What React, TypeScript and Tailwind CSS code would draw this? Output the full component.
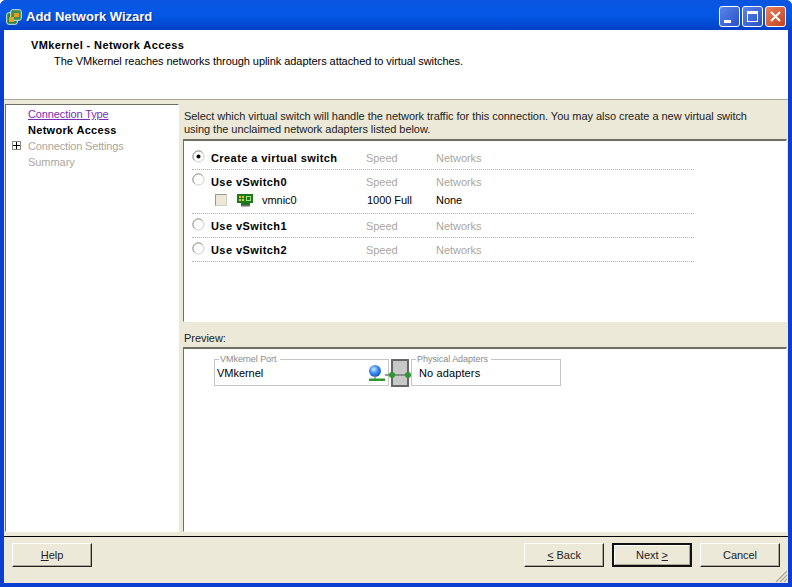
import React from "react";

const font = { fontFamily: '"Liberation Sans", Arial, sans-serif' };

function Radio({ checked }: { checked?: boolean }) {
  return (
    <svg width="13" height="13" viewBox="0 0 13 13" className="shrink-0">
      <circle cx="6.5" cy="6.5" r="5.5" fill="#fff" stroke="#cfccc0" />
      <path d="M2.5 10.5A5.5 5.5 0 0 1 10.5 2.5" fill="none" stroke="#9a988e" />
      {checked && <circle cx="6.5" cy="6.5" r="2" fill="#000" />}
    </svg>
  );
}

function SwitchRow({ label, checked, tight }: { label: string; checked?: boolean; tight?: boolean }) {
  return (
    <div className={tight ? "flex items-center h-[20px] w-[502px] pt-[4px]" : "flex items-center h-[24px] w-[502px] pt-[2px] border-b border-dotted border-[#b5b3aa]"}>
      <div className="w-[19px] flex -mt-[5px]"><Radio checked={checked} /></div>
      <div className="w-[155px] font-bold text-black tracking-[0.42px]">{label}</div>
      <div className="w-[70px] text-[#a9a79d]">Speed</div>
      <div className="text-[#a9a79d]">Networks</div>
    </div>
  );
}

function NicIcon() {
  return (
    <svg width="16" height="13" viewBox="0 0 16 13" className="shrink-0">
      <path d="M0 0H16V9H13V11H4V9H0Z" fill="#1c7a1c" />
      <path d="M4 11H13V12.5H4Z" fill="#6f6f6f" />
      <rect x="2" y="2" width="2" height="2" fill="#e6c832" />
      <rect x="5" y="2" width="2" height="2" fill="#e6c832" />
      <rect x="2" y="5" width="2" height="2" fill="#e6c832" />
      <rect x="5" y="5" width="2" height="2" fill="#bde05a" />
      <rect x="9.5" y="2.5" width="4" height="4" fill="none" stroke="#a6e07a" />
    </svg>
  );
}

function GlobeIcon() {
  return (
    <svg width="16" height="16" viewBox="0 0 16 16" className="shrink-0">
      <defs>
        <radialGradient id="gl" cx="0.4" cy="0.35" r="0.7">
          <stop offset="0" stopColor="#cfe8ff" />
          <stop offset="0.5" stopColor="#3a8cf0" />
          <stop offset="1" stopColor="#1a4fb8" />
        </radialGradient>
      </defs>
      <circle cx="6" cy="6" r="6" fill="url(#gl)" />
      <path d="M6 11V14" stroke="#888" strokeWidth="1.4" />
      <rect x="0" y="13.5" width="16" height="2.5" fill="#2e9a2e" />
    </svg>
  );
}

function Btn({ children, def }: { children: React.ReactNode; def?: boolean }) {
  return (
    <div className={`w-[80px] h-[24px] flex items-center justify-center text-[#222] bg-[#ece9d8] ${def ? "border-2 border-[#111] shadow-[inset_1px_1px_0_#fff,inset_-1px_-1px_0_#aca899]" : "border border-t-white border-l-white border-r-[#222] border-b-[#222] shadow-[inset_-1px_-1px_0_#aca899]"}`}>
      {children}
    </div>
  );
}

function Group({ title, className = "", children }: { title: string; className?: string; children: React.ReactNode }) {
  return (
    <div className={`relative h-[27px] border border-[#c4c4c4] bg-white flex items-center ${className}`}>
      <span className="absolute -top-[6px] left-[4px] bg-white px-[1px] pr-[3px] text-[9px] leading-[11px] text-[#8a8a8a]">{title}</span>
      {children}
    </div>
  );
}

export default function App() {
  return (
    <div style={font} className="w-[792px] h-[587px] text-[11px] leading-[13px] tracking-[-0.04px] flex flex-col overflow-hidden bg-[#0a3fd0] rounded-t-[6px]">
      <div className="h-[30px] shrink-0 flex items-center pt-[3px] pl-[6px] pr-[6px] bg-gradient-to-b from-[#0a55e0] via-[#0458e6] to-[#0340c8]">
        <svg width="16" height="16" viewBox="0 0 16 16" className="mr-[4px]">
          <rect x="0.7" y="3.7" width="10.6" height="11.6" rx="2" fill="#2f7f45" stroke="#dfeed8" />
          <rect x="4.7" y="0.7" width="10.6" height="10.6" rx="2" fill="#3d8f4f" stroke="#d4e8cf" />
          <rect x="3" y="8" width="5" height="5" fill="#e0a526" />
          <rect x="8" y="4" width="5" height="4" fill="#e69a1e" />
        </svg>
        <span className="text-white font-bold text-[13px] tracking-normal [text-shadow:1px_1px_0_#0b2a90]">Add Network Wizard</span>
        <div className="ml-auto flex gap-[2px]">
          <div className="w-[21px] h-[21px] rounded-[3px] border border-white bg-gradient-to-br from-[#5b84ea] to-[#2a4fc6] flex items-end p-[3px]">
            <div className="w-[7px] h-[3px] bg-white ml-[1px]" />
          </div>
          <div className="w-[21px] h-[21px] rounded-[3px] border border-white bg-gradient-to-br from-[#5b84ea] to-[#2a4fc6] flex items-center justify-center">
            <div className="w-[11px] h-[11px] border border-white border-t-[3px]" />
          </div>
          <div className="w-[21px] h-[21px] rounded-[3px] border border-white bg-gradient-to-br from-[#e8815c] to-[#c2401c] flex items-center justify-center">
            <svg width="13" height="13" viewBox="0 0 13 13"><path d="M2 2L11 11M11 2L2 11" stroke="#fff" strokeWidth="2" /></svg>
          </div>
        </div>
      </div>

      <div className="relative flex-1 min-h-0 ml-[4px] mr-[4px] mb-[4px] bg-[#ece9d8] flex flex-col">
        <div className="h-[70px] shrink-0 bg-white pl-[27px] pt-[9px] border-b border-[#aca899] text-black">
          <div className="font-bold tracking-[0.4px]">VMkernel - Network Access</div>
          <div className="pl-[23px] pt-[3px] tracking-[-0.06px]">The VMkernel reaches networks through uplink adapters attached to virtual switches.</div>
        </div>

        <div className="flex-1 min-h-0 flex pt-[4px] pl-[1px] pr-[1px]">
          <div className="w-[174px] shrink-0 bg-white border-t border-l border-t-[#716f64] border-l-[#716f64] border-r border-b border-r-white border-b-white pt-[1px] pl-[22px] leading-[16px]">
            <div className="text-[#7a2fb0] underline tracking-[-0.12px]">Connection Type</div>
            <div className="font-bold text-black tracking-[0.3px]">Network Access</div>
            <div className="relative text-[#a9a79d] tracking-[-0.15px]">
              <span className="absolute -left-[16px] top-[3px] w-[9px] h-[9px] border border-[#888] bg-white flex items-center justify-center">
                <svg width="7" height="7" viewBox="0 0 7 7"><path d="M0 3.5H7M3.5 0V7" stroke="#000" /></svg>
              </span>
              Connection Settings
            </div>
            <div className="text-[#a9a79d]">Summary</div>
          </div>

          <div className="w-[4px] shrink-0" />

          <div className="flex-1 min-w-0 flex flex-col">
            <div className="h-[35px] shrink-0 pt-[6px] pl-[1px] text-[#222]">
              Select which virtual switch will handle the network traffic for this connection. You may also create a new virtual switch<br />using the unclaimed network adapters listed below.
            </div>
            <div className="h-[183px] shrink-0 bg-white border-t-2 border-l border-[#716f64] border-r border-r-white border-b border-b-white pl-[8px] pt-[5px]">
              <SwitchRow label="Create a virtual switch" checked />
              <SwitchRow label="Use vSwitch0" tight />
              <div className="flex items-center h-[24px] w-[502px] pb-[3px] border-b border-dotted border-[#b5b3aa]">
                <div className="w-[23px]" />
                <div className="w-[12px] h-[12px] bg-[#ece9d8] border border-[#cfccc0] border-t-[#9a988e] border-l-[#9a988e] mr-[10px]" />
                <NicIcon />
                <div className="w-[114px] pl-[9px]">vmnic0</div>
                <div className="w-[69px]">1000 Full</div>
                <div>None</div>
              </div>
              <SwitchRow label="Use vSwitch1" />
              <SwitchRow label="Use vSwitch2" />
            </div>
            <div className="h-[25px] shrink-0 flex items-end pb-[2px] pl-[1px] text-[#222]">Preview:</div>
            <div className="flex-1 min-h-0 bg-white border-t-2 border-l border-[#716f64] border-r border-r-white border-b border-b-white pl-[30px] pt-[10px]">
              <div className="flex items-start">
                <Group title="VMkernel Port" className="w-[175px] pl-[2px] pr-[3px] pt-[1px]">
                  <span className="text-black">VMkernel</span>
                  <span className="ml-auto"><GlobeIcon /></span>
                </Group>
                <div className="relative w-[18px] h-[28px] mx-[2px] bg-[#c8c8c8] border-2 border-[#666]">
                  <svg width="32" height="8" viewBox="0 0 32 8" className="absolute -left-[8px] top-[10px] overflow-visible">
                    <path d="M0 4H32" stroke="#777" strokeWidth="1.5" />
                    <circle cx="7" cy="4" r="3" fill="#2a9a2a" />
                    <circle cx="23" cy="4" r="3" fill="#2a9a2a" />
                  </svg>
                </div>
                <Group title="Physical Adapters" className="w-[150px] pl-[7px] pt-[1px]">
                  <span className="text-black tracking-[0.12px]">No adapters</span>
                </Group>
              </div>
            </div>
          </div>
        </div>

        <div className="h-[47px] shrink-0 mt-[4px] border-t border-black flex items-start pt-[6px] px-[8px]">
          <Btn><span><u>H</u>elp</span></Btn>
          <div className="ml-auto flex gap-[8px]">
            <Btn><span><u>&lt;</u> Back</span></Btn>
            <Btn def><span>Next <u>&gt;</u></span></Btn>
            <Btn>Cancel</Btn>
          </div>
        </div>

        <svg width="13" height="13" viewBox="0 0 13 13" className="absolute right-0 bottom-0">
          <path d="M12 1L1 12M12 5L5 12M12 9L9 12" stroke="#aca899" strokeWidth="1.2" />
        </svg>
      </div>
    </div>
  );
}
